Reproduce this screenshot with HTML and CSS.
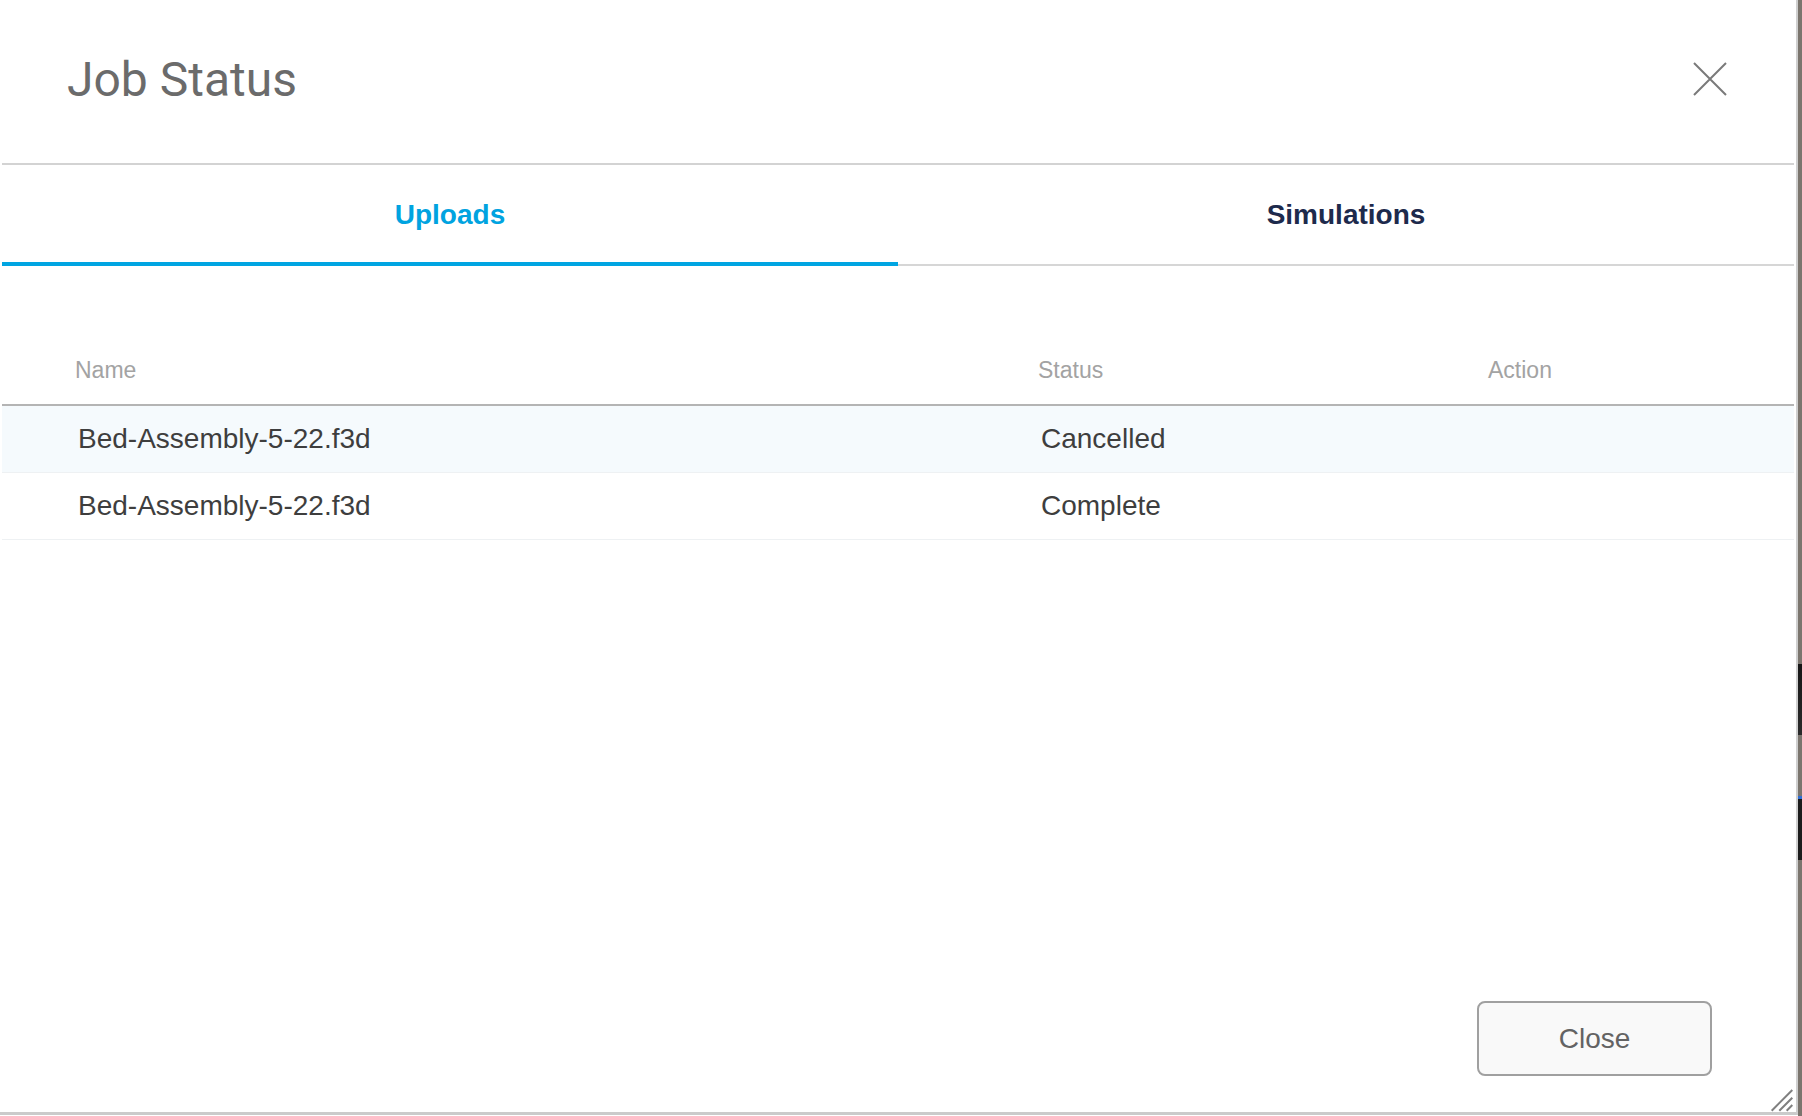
FILE: index.html
```html
<!DOCTYPE html>
<html lang="en">
<head>
<meta charset="utf-8">
<title>Job Status</title>
<link rel="stylesheet" href="styles.css">
</head>
<body>
<div class="screen">
  <div class="dialog">
    <header class="dlg-head">
      <h1 class="title">Job Status</h1>
      <button class="x-btn" aria-label="Close">
        <svg width="34" height="34" viewBox="0 0 34 34"><path d="M1 1 L33 33 M33 1 L1 33" stroke="#7a7a7a" stroke-width="2" fill="none"/></svg>
      </button>
    </header>
    <nav class="tabs">
      <div class="tab active">Uploads</div>
      <div class="tab">Simulations</div>
    </nav>
    <div class="table">
      <div class="row thead"><div class="cell">Name</div><div class="cell">Status</div><div class="cell">Action</div></div>
      <div class="row tr hl"><div class="cell">Bed-Assembly-5-22.f3d</div><div class="cell">Cancelled</div><div class="cell"></div></div>
      <div class="row tr"><div class="cell">Bed-Assembly-5-22.f3d</div><div class="cell">Complete</div><div class="cell"></div></div>
    </div>
    <footer class="foot">
      <button class="close-btn">Close</button>
    </footer>
    <svg class="grip" width="24" height="24" viewBox="0 0 24 24"><path d="M1.7 22.7 L22.3 2 M9.3 22.7 L22.3 9.7 M16.7 22.7 L22.3 17" stroke="#808080" stroke-width="2" fill="none"/></svg>
  </div>
  <div class="desk"></div>
</div>
</body>
</html>
```
FILE: styles.css
```css
html, body {
  margin: 0;
  padding: 0;
  background: #ffffff;
}

.screen {
  display: flex;
  width: 1802px;
  height: 1116px;
  overflow: hidden;
  background: #ffffff;
}

.dialog {
  position: relative;
  width: 1798px;
  height: 1115px;
  box-sizing: border-box;
  padding: 0 2px;
  border-right: 2px solid #cfcfcf;
  border-bottom: 3px solid #cbcbcb;
  display: flex;
  flex-direction: column;
  background: #ffffff;
}

.dlg-head {
  height: 165px;
  box-sizing: border-box;
  padding: 56px 67px 0 65px;
  border-bottom: 2px solid #d3d3d3;
  display: flex;
  justify-content: space-between;
  align-items: flex-start;
}

.title {
  margin: 0;
  font-family: Roboto, "Liberation Sans", sans-serif;
  font-weight: 400;
  font-size: 48px;
  line-height: 48px;
  color: #6b6b6b;
}

.x-btn {
  margin-top: 6px;
  width: 34px;
  height: 34px;
  padding: 0;
  border: 0;
  background: none;
  display: block;
}

.x-btn svg {
  display: block;
}

.tabs {
  display: flex;
}

.tab {
  flex: 1;
  height: 101px;
  box-sizing: border-box;
  border-bottom: 2px solid #d6d6d6;
  display: flex;
  align-items: center;
  justify-content: center;
  font-family: "Liberation Sans", Arial, sans-serif;
  font-weight: 700;
  font-size: 28px;
  line-height: 28px;
  color: #1d2a4c;
}

.tab.active {
  padding-top: 2px;
  border-bottom: 4px solid #00a5e2;
  color: #00a3e0;
}

.table {
  margin-top: 70px;
  font-family: "Liberation Sans", Arial, sans-serif;
}

.row {
  display: grid;
  grid-template-columns: 963px 450px 1fr;
  align-items: center;
  box-sizing: border-box;
}

.thead {
  height: 70px;
  border-bottom: 2px solid #b4b4b4;
  font-size: 23px;
  line-height: 23px;
  color: #a3a3a3;
}

.thead .cell {
  padding-left: 73px;
}

.tr {
  height: 67px;
  border-bottom: 1px solid #eef1f3;
  font-size: 28px;
  line-height: 28px;
  color: #3e3e3e;
}

.tr .cell {
  padding-left: 76px;
}

.tr.hl {
  background: #f5fafd;
}

.foot {
  margin-top: auto;
  display: flex;
  justify-content: flex-end;
  padding: 0 82px 36px 0;
}

.close-btn {
  width: 235px;
  height: 75px;
  box-sizing: border-box;
  border: 2px solid #a0a0a0;
  border-radius: 8px;
  background: #f9f9f9;
  font-family: "Liberation Sans", Arial, sans-serif;
  font-size: 28px;
  color: #636363;
  padding: 0;
}

.grip {
  position: absolute;
  right: 2px;
  bottom: 0;
  display: block;
}

.desk {
  width: 4px;
  height: 1116px;
  flex: none;
  background: linear-gradient(to bottom,
    #7b756e 0, #7b756e 664px,
    #161616 664px, #2a2a2a 735px,
    #7b756e 735px, #7b756e 796px,
    #2f6fd6 796px, #2f6fd6 799px,
    #1b1b1b 799px, #1b1b1b 860px,
    #7b756e 860px, #7b756e 100%);
}
```
